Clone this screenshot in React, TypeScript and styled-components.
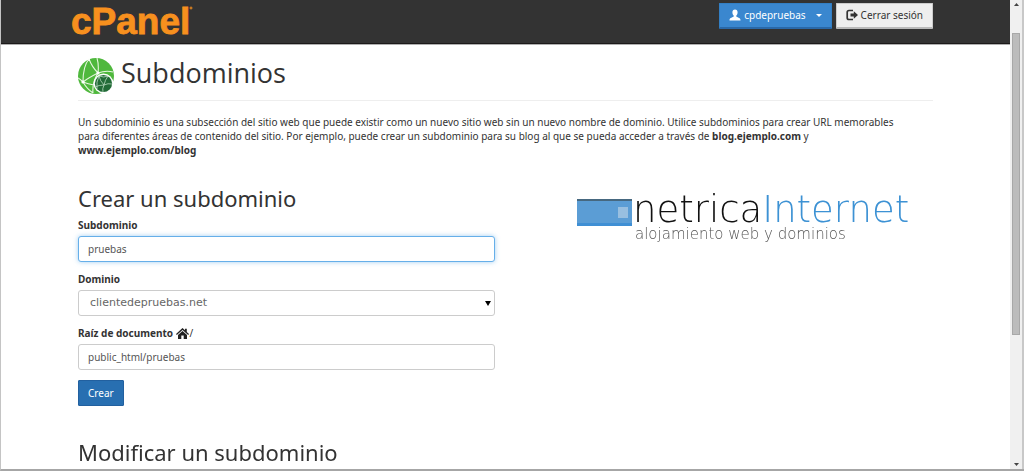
import React from 'react';
import styled, { createGlobalStyle, css } from 'styled-components';

const GlobalStyle = createGlobalStyle`
  *, *::before, *::after { box-sizing: border-box; }
  body {
    margin: 0;
    background: #fff;
    color: #333;
    font-family: "Noto Sans", "Open Sans", sans-serif;
    font-size: 10px;
    line-height: 14px;
  }
  h1, h2, p { margin: 0; }
`;

const Window = styled.div`
  display: flex;
  min-height: 100vh;
  border-left: 1px solid #c4c4c4;
  border-bottom: 2px solid #a6a6a6;
`;

const Page = styled.div`
  flex: 1;
  min-width: 0;
`;

const TopBar = styled.header`
  display: flex;
  align-items: flex-start;
  justify-content: space-between;
  height: 45px;
  padding: 0 77px 0 70px;
  background: #333;
  border-bottom: 1px solid #b0b0b0;
  box-shadow: inset 0 -1px 0 #1c1a1a;
`;

const Brand = styled.a`
  display: block;
  height: 43px;
`;

const Actions = styled.nav`
  display: flex;
  gap: 4px;
  padding-top: 3px;
`;

const BarButton = styled.button<{ $primary?: boolean }>`
  display: flex;
  align-items: center;
  height: 26px;
  padding: 0 9px 1px;
  border: 1px solid #ccc;
  border-bottom: 2px solid #b9b9b9;
  border-radius: 1px;
  background: #eee;
  color: #333;
  font: inherit;
  white-space: nowrap;
  gap: 3px;
  ${(p) =>
    p.$primary &&
    css`
      border-color: #337fc4;
      border-bottom-color: #2968a8;
      background: #3a87cf;
      color: #fff;
    `}
`;

const Caret = styled.svg`
  margin-left: 7px;
`;

const Content = styled.main`
  padding: 9px 77px 0;
`;

const TitleRow = styled.div`
  display: flex;
  align-items: center;
  gap: 7px;
  height: 47px;
  border-bottom: 1px solid #eee;
`;

const Title = styled.h1`
  padding-bottom: 8px;
  font-family: "Open Sans", sans-serif;
  font-size: 27px;
  line-height: 32px;
  font-weight: 400;
`;

const Intro = styled.p`
  padding-top: 14px;
`;

const Columns = styled.div`
  display: grid;
  grid-template-columns: 417px 1fr;
  column-gap: 82px;
  padding-top: 27px;
`;

const SectionTitle = styled.h2`
  font-size: 22px;
  line-height: 28px;
  font-weight: 400;
`;

const Form = styled.form`
  display: flex;
  flex-direction: column;
  align-items: flex-start;
  ${SectionTitle} { margin-bottom: 6px; }
`;

const Field = styled.div`
  display: flex;
  flex-direction: column;
  gap: 4px;
  width: 100%;
  margin-bottom: 10px;
`;

const Label = styled.label`
  display: flex;
  align-items: center;
  height: 14px;
  font-weight: 700;
`;

const PathSlash = styled.span`
  padding-left: 1px;
  font-weight: 400;
`;

const controlStyle = css`
  width: 100%;
  height: 26px;
  padding: 0 9px;
  border: 1px solid #ccc;
  border-radius: 3px;
  background: #fff;
  color: #555;
  font: inherit;
  outline: none;
`;

const TextInput = styled.input`
  ${controlStyle}
  &:focus {
    border-color: #66afe9;
    box-shadow: 0 0 5px rgba(102, 175, 233, 0.6);
  }
`;

const SelectBox = styled.div`
  display: grid;
  align-items: center;
  > * { grid-area: 1 / 1; }
  > svg { justify-self: end; margin-right: 4px; pointer-events: none; }
`;

const Select = styled.select`
  ${controlStyle}
  appearance: none;
  padding: 0 11px;
  color: #666;
  font-family: "DejaVu Sans", sans-serif;
  font-size: 11px;
`;

const SubmitButton = styled.button`
  height: 26px;
  padding: 0 9px;
  border: 1px solid #22609f;
  border-radius: 1px;
  background: #286fb1;
  color: #fff;
  font: inherit;
`;

const HostLogo = styled.aside`
  display: flex;
  align-items: flex-start;
  gap: 1px;
  padding-top: 8px;
  font-family: "DejaVu Sans", sans-serif;
  font-weight: 200;
  white-space: nowrap;
`;

const HostMark = styled.svg`
  flex: none;
  margin-top: 7px;
`;

const HostName = styled.div`
  font-size: 37px;
  line-height: 36px;
  color: #111;
  span { color: #3d92d4; }
`;

const HostTagline = styled.div`
  padding-left: 2px;
  font-size: 15px;
  line-height: 12px;
  color: #555;
`;

const NextSection = styled.section`
  padding-top: 32px;
`;

const ScrollTrack = styled.div`
  display: flex;
  flex-direction: column;
  align-items: center;
  width: 14px;
  padding: 3px 0;
  background: #f0f0f0;
  border-right: 2px solid #c8c8c8;
`;

const ScrollThumb = styled.div`
  width: 8px;
  height: 302px;
  margin: 27px 0 auto;
  border: 1px solid #a8a8a8;
  background: #bcbcbc;
`;

export default function App() {
  return (
    <>
      <GlobalStyle />
      <Window>
        <Page>
          <TopBar>
            <Brand href="#" aria-label="cPanel">
              <svg width="126" height="43" viewBox="0 0 126 43">
                <text x="0" y="34" fill="#f7901e" stroke="#f7901e" strokeWidth="0.8" fontFamily="Liberation Sans, sans-serif" fontWeight="700" fontSize="37">cPanel</text>
                <circle cx="120" cy="8" r="1" fill="none" stroke="#f7901e" />
              </svg>
            </Brand>
            <Actions>
              <BarButton $primary type="button">
                <svg width="12" height="12" viewBox="0 0 12 12" fill="currentColor">
                  <path d="M6 .5C7.700 .5 8.600 1.700 8.600 3.300c0 1.400-.5 2.600-1.300 3.300v1c.3.8 4.200 1.200 4.200 3.400v.5H.5V11c0-2.200 3.900-2.600 4.200-3.400v-1C3.900 5.900 3.400 4.700 3.400 3.300 3.400 1.700 4.300.5 6 .5z" />
                </svg>
                cpdepruebas
                <Caret width="6" height="3" viewBox="0 0 6 3" fill="currentColor">
                  <path d="M0 0h6L3 3z" />
                </Caret>
              </BarButton>
              <BarButton type="button">
                <svg width="12" height="12" viewBox="0 0 12 12">
                  <path d="M7 1.500H3Q1.200 1.500 1.200 3.300v5.400q0 1.800 1.800 1.800h4" fill="none" stroke="currentColor" strokeWidth="1.700" />
                  <path d="M4.500 4.600h3.300V2.300L12 6 7.800 9.700V7.400H4.500z" fill="currentColor" />
                </svg>
                Cerrar sesión
              </BarButton>
            </Actions>
          </TopBar>
          <Content>
            <TitleRow>
              <svg width="36" height="38" viewBox="0 0 36 38">
                <circle cx="18" cy="18" r="18" fill="#4fb83d" />
                <g fill="none" stroke="#e6f6df" strokeWidth="1.100">
                  <path d="M11 1Q14 9 20 15M20 15Q21 7 19 0M20 15Q28 12 35 14M20 15Q10 20 5 24M11 1Q5 8 5 24M5 24Q2 21 0 20M5 24Q9 31 15 35M20 15Q14 25 15 35M5 24Q10 26 16 27" />
                </g>
                <circle cx="25.500" cy="25.500" r="10" fill="#fff" />
                <circle cx="25.500" cy="25.500" r="8.600" fill="#226b37" />
                <g fill="none" stroke="#b8d8be" strokeWidth=".8">
                  <path d="M21 18Q22 23 26 27M21 18Q18 24 19 31M30 18Q27 22 26 27M26 27Q30 25 34 26M26 27Q24 31 25 34M26 27Q21 27 17 29M21 18Q26 20 30 18" />
                </g>
                <g fill="#fff">
                  <circle cx="20" cy="15" r="1.600" />
                  <circle cx="5" cy="24" r="1.600" />
                  <circle cx="11" cy="2" r="1" />
                </g>
              </svg>
              <Title>Subdominios</Title>
            </TitleRow>
            <Intro>
              Un subdominio es una subsección del sitio web que puede existir como un nuevo sitio web sin un nuevo
              nombre de dominio. Utilice subdominios para crear URL memorables
              <br />
              para diferentes áreas de contenido del sitio. Por ejemplo, puede crear un subdominio para su blog al que
              se pueda acceder a través de <b>blog.ejemplo.com</b> y
              <br />
              <b>www.ejemplo.com/blog</b>
            </Intro>
            <Columns>
              <Form onSubmit={(e) => e.preventDefault()}>
                <SectionTitle>Crear un subdominio</SectionTitle>
                <Field>
                  <Label htmlFor="sub">Subdominio</Label>
                  <TextInput id="sub" defaultValue="pruebas" autoFocus />
                </Field>
                <Field>
                  <Label htmlFor="domain">Dominio</Label>
                  <SelectBox>
                    <Select id="domain">
                      <option>clientedepruebas.net</option>
                    </Select>
                    <svg width="6" height="5" viewBox="0 0 6 5">
                      <path d="M0 0h6L3 5z" fill="#000" />
                    </svg>
                  </SelectBox>
                </Field>
                <Field>
                  <Label htmlFor="root">
                    Raíz de documento&nbsp;
                    <svg width="13" height="11" viewBox="0 0 13 11" fill="#222">
                      <path d="M6.500 0L9 2.300V.8h1.800V4L13 6l-.8 1L6.500 1.900.8 7 0 6z" />
                      <path d="M6.500 2.900L11 6.900V11H7.700V7.600H5.300V11H2V6.900z" />
                    </svg>
                    <PathSlash>/</PathSlash>
                  </Label>
                  <TextInput id="root" defaultValue="public_html/pruebas" />
                </Field>
                <SubmitButton type="submit">Crear</SubmitButton>
              </Form>
              <HostLogo>
                <HostMark width="55" height="27" viewBox="0 0 55 27">
                  <path fill="#5b9dd5" d="M0 0h55v27H0z" />
                  <path fill="#466880" d="M0 0h55v2H0z" />
                  <path fill="#3f8fd4" d="M0 24h55v3H0z" />
                  <path fill="#98bfe0" d="M41 8h10v11H41z" />
                </HostMark>
                <div>
                  <HostName>netrica<span>Internet</span></HostName>
                  <HostTagline>alojamiento web y dominios</HostTagline>
                </div>
              </HostLogo>
            </Columns>
            <NextSection>
              <SectionTitle>Modificar un subdominio</SectionTitle>
            </NextSection>
          </Content>
        </Page>
        <ScrollTrack>
          <svg width="5" height="3" viewBox="0 0 5 3"><path d="M0 3h5L2.500 0z" fill="#444" /></svg>
          <ScrollThumb />
          <svg width="5" height="3" viewBox="0 0 5 3"><path d="M0 0h5L2.500 3z" fill="#444" /></svg>
        </ScrollTrack>
      </Window>
    </>
  );
}
